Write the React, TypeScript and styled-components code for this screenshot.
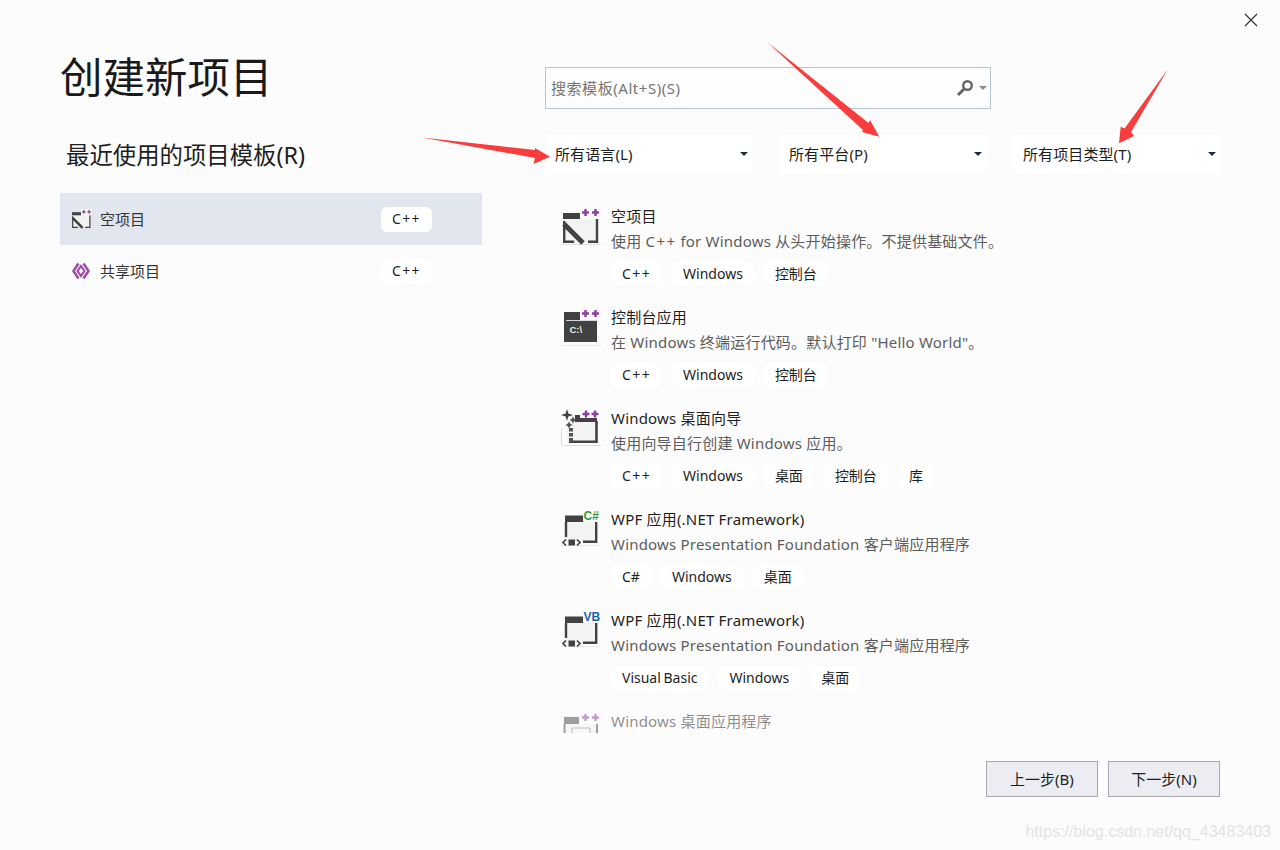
import React from "react";
import styled, { createGlobalStyle } from "styled-components";

const Global = createGlobalStyle`
  html, body { margin: 0; padding: 0; background: #fcfcfc; }
  * { box-sizing: border-box; }
`;

const Page = styled.div`
  position: relative;
  width: 1280px;
  height: 850px;
  overflow: hidden;
  display: flex;
  flex-direction: column;
  background: #fcfcfc;
  color: #1e1e1e;
  font-family: "Noto Sans", "Noto Sans CJK SC", sans-serif;
  font-size: 15px;
`;
const TopBar = styled.div`
  height: 40px;
  display: flex;
  justify-content: flex-end;
  align-items: flex-start;
  padding: 13px 22px 0 0;
`;
const CloseIcon = styled.svg`
  width: 14px;
  height: 14px;
  display: block;
`;
const Main = styled.div`
  flex: 1;
  min-height: 0;
  display: grid;
  grid-template-columns: 422px 675px;
  column-gap: 63px;
  padding: 0 60px;
`;
const LeftColumn = styled.div`
  display: flex;
  flex-direction: column;
`;
const Title = styled.h1`
  margin: 9px 0 0;
  font-size: 42.5px;
  line-height: 56px;
  font-weight: 400;
  color: #1a1a1a;
`;
const Subtitle = styled.h2`
  margin: 35px 0 0;
  padding-left: 6px;
  font-size: 23.4px;
  line-height: 30px;
  font-weight: 400;
  color: #1e1e1e;
`;
const RecentList = styled.div`
  margin-top: 23px;
  display: flex;
  flex-direction: column;
`;
const RecentRow = styled.div<{ $selected?: boolean }>`
  height: 52px;
  display: flex;
  align-items: center;
  padding: 0 50px 0 10px;
  background: ${(p) => (p.$selected ? "#e2e6ee" : "transparent")};
`;
const RecentIcon = styled.span`
  width: 22px;
  height: 22px;
  margin-right: 8px;
  display: flex;
  align-items: center;
  justify-content: center;
`;
const RecentName = styled.span`
  flex: 1;
  font-size: 15px;
  color: #333;
  padding-bottom: 2px;
`;
const RightColumn = styled.div`
  display: flex;
  flex-direction: column;
  min-height: 0;
`;
const SearchBox = styled.div`
  margin-top: 27px;
  width: 446px;
  height: 42px;
  display: flex;
  align-items: center;
  padding: 0 3px 0 5px;
  background: #fdfdfd;
  border: 1px solid #b9c3d6;
`;
const Placeholder = styled.span`
  flex: 1;
  color: #757575;
  font-size: 15px;
  letter-spacing: 0.55px;
  padding-bottom: 2px;
`;
const SearchGlyph = styled.svg`
  width: 18px;
  height: 18px;
  margin-right: 5px;
  display: block;
`;
const Caret = styled.span<{ $color: string }>`
  width: 0;
  height: 0;
  border-left: 4px solid transparent;
  border-right: 4px solid transparent;
  border-top: 4px solid ${(p) => p.$color};
`;
const Filters = styled.div`
  margin-top: 26px;
  padding-left: 1px;
  display: grid;
  grid-template-columns: repeat(3, 206px);
  column-gap: 28px;
`;
const Filter = styled.div`
  height: 39px;
  background: #fff;
  display: flex;
  align-items: center;
  justify-content: space-between;
  padding: 0 4px 2px 9px;
  font-size: 15px;
  letter-spacing: 0.1px;
  color: #1e1e1e;
`;
const TemplateList = styled.div`
  margin-top: 30px;
  height: 529px;
  overflow: hidden;
  display: flex;
  flex-direction: column;
`;
const Template = styled.div<{ $faded?: boolean }>`
  flex: 0 0 101px;
  display: grid;
  grid-template-columns: 40px 1fr;
  column-gap: 10px;
  padding-left: 16px;
  opacity: ${(p) => (p.$faded ? 0.5 : 1)};
`;
const TemplateIcon = styled.div`
  margin-top: 3px;
  width: 40px;
  height: 40px;
`;
const TemplateName = styled.div`
  font-size: 15px;
  line-height: 25px;
  letter-spacing: 0.2px;
  color: #1e1e1e;
`;
const TemplateDesc = styled.div`
  font-size: 15px;
  line-height: 25px;
  letter-spacing: 0.2px;
  color: #5c5c5c;
`;
const WideCode = styled.span`
  letter-spacing: 1.4px;
`;
const Tags = styled.div`
  margin-top: 8px;
  display: flex;
  gap: 10px;
`;
const Tag = styled.span<{ $wide?: boolean }>`
  height: 24px;
  padding: 0 11px 2px;
  display: inline-flex;
  align-items: center;
  background: #fff;
  border-radius: 6px;
  font-size: 14px;
  word-spacing: -1px;
  letter-spacing: ${(p) => (p.$wide ? "1.4px" : "0")};
  color: #1e1e1e;
`;
const RecentTag = styled(Tag)`
  width: 51px;
  height: 25px;
  justify-content: center;
  padding: 0 0 2px;
`;
const Footer = styled.div`
  display: flex;
  justify-content: flex-end;
  gap: 10px;
  padding: 28px 60px 53px;
`;
const Button = styled.button`
  width: 112px;
  height: 36px;
  padding: 0 0 2px;
  background: #ecedf2;
  border: 1px solid #a9a9ad;
  border-radius: 0;
  font: inherit;
  font-size: 15px;
  color: #1e1e1e;
`;
const Watermark = styled.div`
  position: absolute;
  right: 9px;
  top: 821px;
  font-family: "Liberation Sans", sans-serif;
  font-size: 16px;
  line-height: 22px;
  color: #e4e4e4;
`;
const ArrowLayer = styled.svg`
  position: absolute;
  inset: 0;
  width: 1280px;
  height: 850px;
  pointer-events: none;
`;

const Plus = ({ x, y, color = "#8e3f9e" }: { x: number; y: number; color?: string }) => (
  <path d={`M${x - 3.5} ${y}h7M${x} ${y - 3.5}v7`} stroke={color} strokeWidth={2.4} fill="none" />
);

const PlusPair = () => (
  <>
    <rect x={19} y={0} width={21} height={12} fill="#fcfcfc" />
    <Plus x={24.5} y={5.5} />
    <Plus x={34.5} y={5.5} />
  </>
);

const EmptyGlyph = ({ size = 40 }: { size?: number }) => (
  <svg width={size} height={size} viewBox="0 0 40 40" style={{ display: "block" }}>
    <path d="M0 37.5h40" stroke="#e0e0e0" strokeWidth={1} />
    <rect x={3} y={6} width={34} height={29} fill="#f3f3f3" />
    <path d="M2 6h17v6H2z" fill="#424242" />
    <path d="M3 17L22 36" stroke="#424242" strokeWidth={5} fill="none" />
    <path d="M3.2 14v20.8h10M36 11v23.8H27" stroke="#424242" strokeWidth={2.4} fill="none" />
    <PlusPair />
  </svg>
);

const ConsoleGlyph = () => (
  <svg width={40} height={40} viewBox="0 0 40 40" style={{ display: "block" }}>
    <path d="M0 37.5h40" stroke="#ececec" strokeWidth={1} />
    <rect x={3} y={4} width={33} height={30} fill="#424242" />
    <path d="M5 12.5h31" stroke="#d8d8d8" strokeWidth={1} />
    <text x={8.5} y={24.5} fontSize={9.5} fontWeight={700} fill="#eeeeee" fontFamily="Liberation Sans, sans-serif">
      C:\
    </text>
    <PlusPair />
  </svg>
);

const WizardGlyph = () => (
  <svg width={40} height={40} viewBox="0 0 40 40" style={{ display: "block" }}>
    <path d="M1 36.5h39M0.5 20v16" stroke="#dcdcdc" strokeWidth={1} />
    <rect x={6} y={12} width={30} height={22} fill="#f3f3f3" />
    <path d="M14 6h22v7H14z" fill="#424242" />
    <rect x={19} y={0} width={21} height={9} fill="#fcfcfc" />
    <path d="M35.5 12v20.8H8" stroke="#424242" strokeWidth={2.6} fill="none" />
    <path d="M8 19h4v3.5H8zM8 24h4v3.5H8zM8 29h4v4H8z" fill="#555" />
    <path d="M6 0l1.4 4.6L12 6 7.4 7.4 6 12 4.6 7.4 0 6l4.6-1.4z" fill="#424242" />
    <path d="M12 7.5l1.2 2.3 2.3 1.2-2.3 1.2-1.2 2.3-1.2-2.3-2.3-1.2 2.3-1.2z" fill="#555" />
    <path d="M8 12.5l1.2 2.3 2.3 1.2-2.3 1.2-1.2 2.3-1.2-2.3-2.3-1.2 2.3-1.2z" fill="#555" />
    <Plus x={25} y={5} />
    <Plus x={34} y={5} />
  </svg>
);

const WpfGlyph = ({ label, color }: { label: string; color: string }) => (
  <svg width={40} height={40} viewBox="0 0 40 40" style={{ display: "block" }}>
    <path d="M0 35.5h40" stroke="#e6e6e6" strokeWidth={1} />
    <rect x={4} y={6} width={31} height={26} fill="#f3f3f3" />
    <path d="M4 5.5h18.5V12H4z" fill="#424242" />
    <path d="M5 12v15M35.2 12v19.8H22" stroke="#424242" strokeWidth={2.4} fill="none" />
    <path d="M5 29.5L2 32.5l3 3M16 29.5l3 3-3 3" stroke="#424242" strokeWidth={1.7} fill="none" />
    <rect x={7.5} y={29.5} width={6.5} height={6} fill="#424242" />
    <rect x={22} y={0} width={18} height={11.5} fill="#fcfcfc" />
    <text x={22.5} y={10} fontSize={12} fontWeight={700} fill={color} fontFamily="Liberation Sans, sans-serif">
      {label}
    </text>
  </svg>
);

const DesktopGlyph = () => (
  <svg width={40} height={40} viewBox="0 0 40 40" style={{ display: "block" }}>
    <path d="M0 5h40" stroke="#dcdcdc" strokeWidth={1} />
    <rect x={3} y={6} width={33} height={29} fill="#f3f3f3" />
    <path d="M3 5h15v7H3z" fill="#424242" />
    <path d="M3.5 12v23M36 12v23" stroke="#424242" strokeWidth={2} fill="none" />
    <path d="M11 16h18v19H11z" fill="none" stroke="#8a8a8a" strokeWidth={1.2} />
    <PlusPair />
  </svg>
);

const SharedGlyph = () => (
  <svg width={20} height={20} viewBox="0 0 20 20" style={{ display: "block" }}>
    <path d="M7.5 2.5L2.5 10l5 7.5M12.5 2.5l5 7.5-5 7.5" stroke="#a04fa8" strokeWidth={2.6} fill="none" />
    <path d="M10 5l3.4 5-3.4 5-3.4-5z" stroke="#a04fa8" strokeWidth={2.2} fill="#fff" />
  </svg>
);

const templates = [
  { name: "空项目", desc: <>使用 <WideCode>C++</WideCode> for Windows 从头开始操作。不提供基础文件。</>, tags: ["C++", "Windows", "控制台"], icon: <EmptyGlyph /> },
  { name: "控制台应用", desc: "在 Windows 终端运行代码。默认打印 \"Hello World\"。", tags: ["C++", "Windows", "控制台"], icon: <ConsoleGlyph /> },
  { name: "Windows 桌面向导", desc: "使用向导自行创建 Windows 应用。", tags: ["C++", "Windows", "桌面", "控制台", "库"], icon: <WizardGlyph /> },
  { name: "WPF 应用(.NET Framework)", desc: "Windows Presentation Foundation 客户端应用程序", tags: ["C#", "Windows", "桌面"], icon: <WpfGlyph label="C#" color="#2f9a3a" /> },
  { name: "WPF 应用(.NET Framework)", desc: "Windows Presentation Foundation 客户端应用程序", tags: ["Visual Basic", "Windows", "桌面"], icon: <WpfGlyph label="VB" color="#1d63a8" /> },
  { name: "Windows 桌面应用程序", desc: "", tags: [], icon: <DesktopGlyph />, faded: true },
];

export default function App() {
  return (
    <Page>
      <Global />
      <TopBar>
        <CloseIcon viewBox="0 0 14 14">
          <path d="M1 1l12 12M13 1L1 13" stroke="#333" strokeWidth={1.2} fill="none" />
        </CloseIcon>
      </TopBar>
      <Main>
        <LeftColumn>
          <Title>创建新项目</Title>
          <Subtitle>最近使用的项目模板(R)</Subtitle>
          <RecentList>
            <RecentRow $selected>
              <RecentIcon><EmptyGlyph size={21} /></RecentIcon>
              <RecentName>空项目</RecentName>
              <RecentTag $wide>C++</RecentTag>
            </RecentRow>
            <RecentRow>
              <RecentIcon><SharedGlyph /></RecentIcon>
              <RecentName>共享项目</RecentName>
              <RecentTag $wide>C++</RecentTag>
            </RecentRow>
          </RecentList>
        </LeftColumn>
        <RightColumn>
          <SearchBox>
            <Placeholder>搜索模板(Alt+S)(S)</Placeholder>
            <SearchGlyph viewBox="0 0 18 18">
              <circle cx={11.5} cy={6.5} r={4.3} stroke="#666" strokeWidth={2.4} fill="none" />
              <path d="M8 10l-6 6" stroke="#666" strokeWidth={3} fill="none" />
            </SearchGlyph>
            <Caret $color="#8a8a8a" />
          </SearchBox>
          <Filters>
            {["所有语言(L)", "所有平台(P)", "所有项目类型(T)"].map((label) => (
              <Filter key={label}>
                {label}
                <Caret $color="#1e2a44" />
              </Filter>
            ))}
          </Filters>
          <TemplateList>
            {templates.map((t, i) => (
              <Template key={i} $faded={t.faded}>
                <TemplateIcon>{t.icon}</TemplateIcon>
                <div>
                  <TemplateName>{t.name}</TemplateName>
                  {t.desc && <TemplateDesc>{t.desc}</TemplateDesc>}
                  {t.tags.length > 0 && (
                    <Tags>
                      {t.tags.map((tag) => (
                        <Tag key={tag} $wide={tag === "C++"}>{tag}</Tag>
                      ))}
                    </Tags>
                  )}
                </div>
              </Template>
            ))}
          </TemplateList>
        </RightColumn>
      </Main>
      <Footer>
        <Button>上一步(B)</Button>
        <Button>下一步(N)</Button>
      </Footer>
      <Watermark>https://blog.csdn.net/qq_43483403</Watermark>
      <ArrowLayer viewBox="0 0 1280 850">
        <path d="M422 137.5L535 150 535 148 550 156.7 533.5 164 535 158z" fill="#f93c3c" />
        <path d="M767 42L868.5 123 870 120 879.3 136.7 862 132 863 130z" fill="#f93c3c" />
        <path d="M1168 69L1131 132 1134 136 1119 143.3 1120.7 126.7 1124.5 128.5z" fill="#f93c3c" />
      </ArrowLayer>
    </Page>
  );
}
